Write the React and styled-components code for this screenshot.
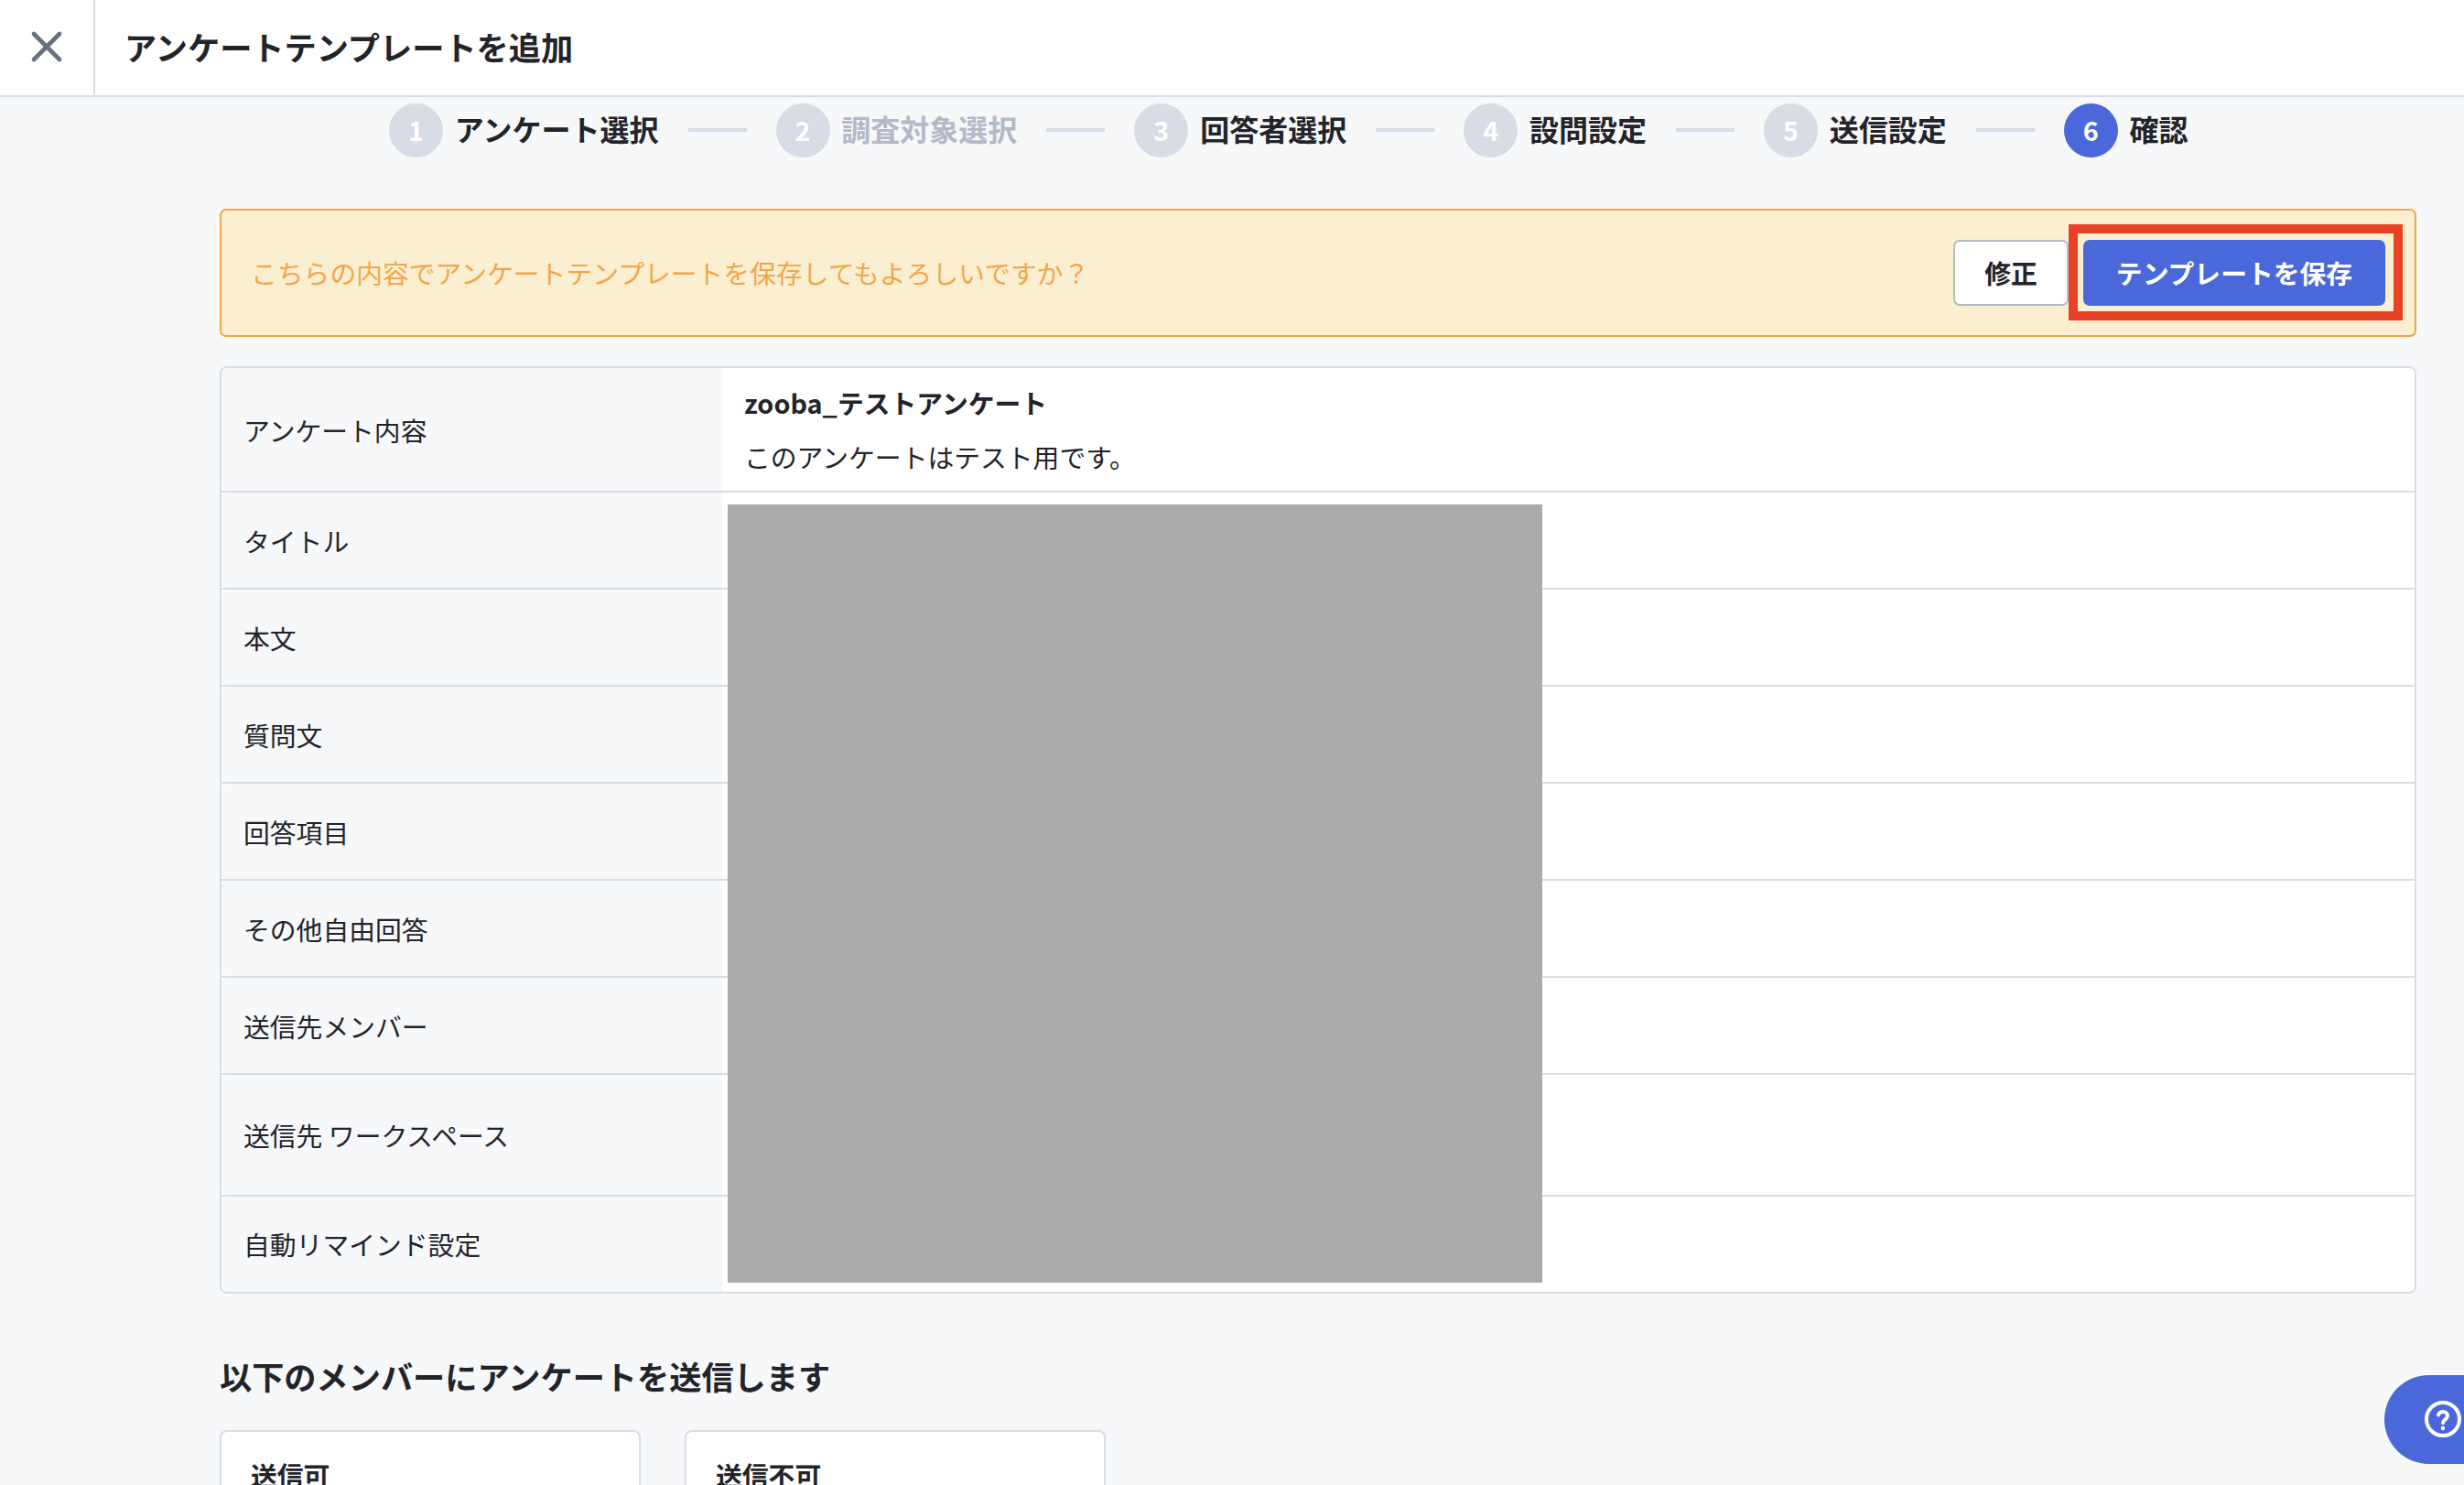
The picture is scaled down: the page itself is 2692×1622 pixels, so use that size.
import React, { Fragment } from "react";
import styled, { createGlobalStyle } from "styled-components";

const GlobalStyle = createGlobalStyle`
  * {
    box-sizing: border-box;
  }
  body {
    margin: 0;
    background-color: #f7f8fa;
    color: #23242a;
    font-family: "Noto Sans CJK JP", "Noto Sans", sans-serif;
    font-size: 28.8px;
    line-height: 42px;
  }
`;

const Page = styled.div`
  height: 1622px;
  overflow: hidden;
`;

const Header = styled.header`
  display: flex;
  height: 106px;
  background-color: #fff;
  border-bottom: 2px solid #d8dce5;
`;

const CloseButton = styled.button`
  display: flex;
  align-items: center;
  justify-content: center;
  width: 104px;
  height: 103px;
  padding: 0 0 1px;
  border: none;
  border-right: 2px solid #d8dce5;
  background: none;
  cursor: pointer;
`;

const Title = styled.h1`
  margin: 0;
  padding-left: 32px;
  font-size: 35.2px;
  font-weight: 700;
  line-height: 102px;
`;

const Steps = styled.ol`
  display: flex;
  align-items: center;
  height: 59px;
  margin: 7px 0 56px 425px;
  padding: 0;
  list-style: none;
`;

const Step = styled.li`
  display: flex;
  align-items: center;
  height: 59px;
  color: ${(props) => (props.$disabled ? "#b3b9c7" : "#23242a")};
  font-size: 32px;
  font-weight: 700;
  white-space: nowrap;
`;

const StepNumber = styled.span`
  width: 59px;
  height: 59px;
  margin-right: 12.8px;
  border-radius: 50%;
  background-color: ${(props) => (props.$active ? "#4a68da" : "#d8dce5")};
  color: #fff;
  font-size: 28.8px;
  line-height: 58px;
  text-align: center;
`;

const StepLabel = styled.span`
  padding-bottom: 6px;
`;

const StepLine = styled.li`
  width: 64px;
  height: 4px;
  margin: 0 32px 1px;
  background-color: #d8dce5;
`;

const Content = styled.main`
  width: 2400px;
  margin-left: 240px;
`;

const Alert = styled.div`
  display: flex;
  align-items: center;
  justify-content: space-between;
  height: 140px;
  padding: 0 32px;
  border: 2px solid #f2a64a;
  border-radius: 7px;
  background-color: #fbefd2;
  color: #f2a64a;
`;

const Buttons = styled.div`
  display: flex;
  gap: 16px;
`;

const Button = styled.button`
  height: 72px;
  padding: 0 0 2px;
  width: ${(props) => (props.$primary ? "330px" : "126px")};
  border: ${(props) => (props.$primary ? "none" : "2px solid #b3b9c7")};
  border-radius: 7px;
  background-color: ${(props) => (props.$primary ? "#4a68da" : "#fff")};
  color: ${(props) => (props.$primary ? "#fff" : "#23242a")};
  font-family: inherit;
  font-size: 28.8px;
  font-weight: 700;
  cursor: pointer;
`;

const Highlight = styled.div`
  position: relative;

  &::after {
    content: "";
    position: absolute;
    top: -17px;
    right: -19px;
    bottom: -16px;
    left: -16px;
    border: 10px solid #ea4025;
    pointer-events: none;
  }
`;

const Table = styled.div`
  position: relative;
  margin-top: 32px;
  border: 2px solid #d8dce5;
  border-radius: 8px;
  background-color: #fff;
`;

const Label = styled.div`
  display: flex;
  align-items: center;
  width: 547px;
  padding: 1px 0 0 24px;
  border-radius: 6px 0 0 6px;
  background-color: #f7f8fa;
`;

const Row = styled.div`
  display: flex;
  height: ${(props) => props.$height || 106}px;
  border-bottom: 2px solid #d8dce5;

  &:last-of-type {
    height: 104px;
    border-bottom: none;
  }

  &:last-of-type ${Label} {
    padding-top: 0;
    padding-bottom: 1px;
  }
`;

const Value = styled.div`
  display: flex;
  flex-direction: column;
  justify-content: center;
  gap: 17px;
  padding-left: 24px;
`;

const Mask = styled.span`
  position: absolute;
  top: 149px;
  left: 553px;
  width: 890px;
  height: 850px;
  background-color: #aaa;
`;

const SectionTitle = styled.h2`
  margin: 64px 0 33px;
  font-size: 35.2px;
  font-weight: 700;
  line-height: 52px;
`;

const Cards = styled.div`
  display: flex;
  gap: 48px;
`;

const Card = styled.div`
  width: 460px;
  height: 240px;
  padding: 26px 32px;
  border: 2px solid #d8dce5;
  border-radius: 8px;
  background-color: #fff;
  font-weight: 700;
`;

const HelpButton = styled.button`
  position: fixed;
  top: 1502px;
  right: 0;
  display: flex;
  align-items: center;
  width: 87px;
  height: 97px;
  padding: 0 0 1px 40px;
  border: none;
  border-radius: 48.5px 0 0 48.5px;
  background-color: #4a68da;
  cursor: pointer;

  svg {
    flex-shrink: 0;
  }
`;

const steps = [
  { label: "アンケート選択" },
  { label: "調査対象選択", disabled: true },
  { label: "回答者選択" },
  { label: "設問設定" },
  { label: "送信設定" },
  { label: "確認", active: true },
];

const rows = [
  { label: "タイトル" },
  { label: "本文" },
  { label: "質問文" },
  { label: "回答項目" },
  { label: "その他自由回答" },
  { label: "送信先メンバー" },
  { label: "送信先 ワークスペース", height: 133 },
  { label: "自動リマインド設定" },
];

const CloseIcon = () => (
  <svg width="36" height="36" viewBox="0 0 36 36" fill="none">
    <path
      d="M4 4L32 32M32 4L4 32"
      stroke="#677080"
      strokeWidth="4.6"
      strokeLinecap="round"
    />
  </svg>
);

const HelpIcon = () => (
  <svg width="48" height="48" viewBox="0 0 48 48" fill="none">
    <circle cx="24" cy="24" r="18" stroke="#fff" strokeWidth="4" />
    <path
      d="M19 19.4C19.9 17.2 21.7 16 24 16C26.9 16 29 17.9 29 20.5C29 24.2 24 24.6 24 28.3"
      stroke="#fff"
      strokeWidth="4"
      strokeLinecap="round"
    />
    <circle cx="24" cy="34" r="2.2" fill="#fff" />
  </svg>
);

const App = () => {
  return (
    <Page>
      <GlobalStyle />
      <Header>
        <CloseButton aria-label="閉じる">
          <CloseIcon />
        </CloseButton>
        <Title>アンケートテンプレートを追加</Title>
      </Header>
      <Steps>
        {steps.map((step, index) => (
          <Fragment key={step.label}>
            {index > 0 && <StepLine />}
            <Step $disabled={step.disabled}>
              <StepNumber $active={step.active}>{index + 1}</StepNumber>
              <StepLabel>{step.label}</StepLabel>
            </Step>
          </Fragment>
        ))}
      </Steps>
      <Content>
        <Alert>
          <span>
            こちらの内容でアンケートテンプレートを保存してもよろしいですか？
          </span>
          <Buttons>
            <Button>修正</Button>
            <Highlight>
              <Button $primary>テンプレートを保存</Button>
            </Highlight>
          </Buttons>
        </Alert>
        <Table>
          <Row $height={136}>
            <Label>アンケート内容</Label>
            <Value>
              <strong>zooba_テストアンケート</strong>
              <span>このアンケートはテスト用です。</span>
            </Value>
          </Row>
          {rows.map((row) => (
            <Row key={row.label} $height={row.height}>
              <Label>{row.label}</Label>
            </Row>
          ))}
          <Mask />
        </Table>
        <SectionTitle>以下のメンバーにアンケートを送信します</SectionTitle>
        <Cards>
          <Card>送信可</Card>
          <Card>送信不可</Card>
        </Cards>
      </Content>
      <HelpButton aria-label="ヘルプ">
        <HelpIcon />
      </HelpButton>
    </Page>
  );
};

export default App;
